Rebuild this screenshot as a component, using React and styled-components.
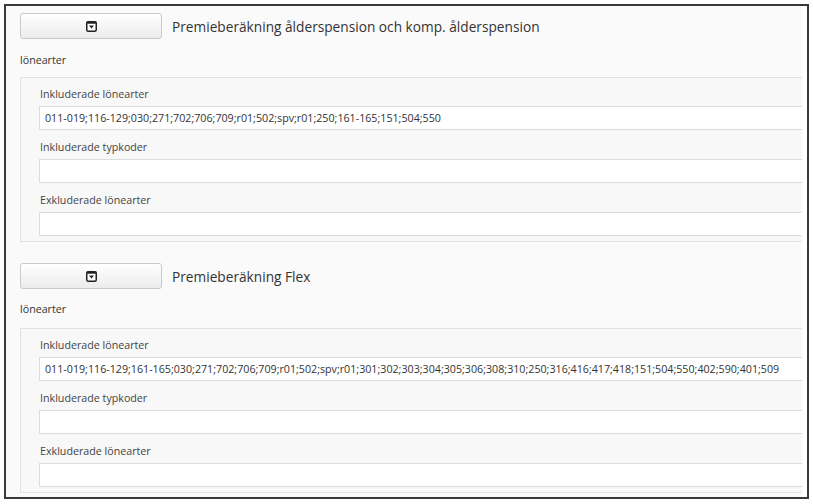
import styled, { createGlobalStyle } from 'styled-components';

const GlobalStyle = createGlobalStyle`
  html, body {
    margin: 0;
    padding: 0;
    background: #ffffff;
  }
  body {
    font-family: "Open Sans", "Noto Sans", "Liberation Sans", sans-serif;
    color: #333;
  }
`;

const Frame = styled.div`
  margin: 4px;
  width: 796px;
  height: 491px;
  border: 2px solid #3a3a3a;
  background: #ffffff;
  padding-right: 5px;
  box-sizing: content-box;
  display: flex;
`;

const Scroller = styled.div`
  flex: 1;
  overflow: hidden;
  background: #fafafa;
  padding: 7px 0 0 14px;
`;

const Section = styled.section`
  display: flex;
  flex-direction: column;
  margin-bottom: 21px;
`;

const Header = styled.div`
  display: flex;
  align-items: center;
  height: 26px;
`;

const ToggleButton = styled.button`
  width: 142px;
  height: 26px;
  border: 1px solid #cacaca;
  border-radius: 3px;
  background: linear-gradient(#ffffff, #ececec);
  display: flex;
  align-items: center;
  justify-content: center;
  padding: 0;
  cursor: pointer;
`;

const Title = styled.h2`
  margin: 0 0 0 10px;
  font-size: 13.7px;
  font-weight: 400;
  color: #333;
  white-space: nowrap;
`;

const GroupLabel = styled.div`
  font-size: 10.7px;
  line-height: 15px;
  color: #333;
  margin: ${(p) => (p.$second ? '13px 0 11px' : '14px 0 9px')};
`;

const Box = styled.div`
  width: 800px;
  border: 1px solid #e2e2e2;
  background: #f8f8f8;
  padding: 9px 0 5px 18px;
  display: flex;
  flex-direction: column;
`;

const FieldLabel = styled.label`
  font-size: 10.7px;
  line-height: 15px;
  color: #444;
  margin: ${(p) => (p.$first ? '0 0 4px 1px' : '10px 0 4px 1px')};
`;

const Field = styled.input`
  box-sizing: border-box;
  width: 790px;
  height: 24px;
  border: 1px solid #dcdcdc;
  background: #ffffff;
  font-family: "Open Sans", "Noto Sans", "Liberation Sans", sans-serif;
  font-size: 10.7px;
  color: #333;
  padding: 0 5px;
  outline: none;
`;

const ToggleIcon = () => (
  <svg width="11" height="11" viewBox="0 0 11 11">
    <rect x="0.75" y="0.75" width="9.5" height="9.5" rx="1.5" fill="#fff" stroke="#222" strokeWidth="1.5" />
    <rect x="0.5" y="0.5" width="10" height="2.2" rx="1.2" fill="#222" />
    <path d="M3 4.6 L8 4.6 L5.5 7.6 Z" fill="#222" />
  </svg>
);

const sections = [
  {
    title: 'Premieberäkning ålderspension och komp. ålderspension',
    codes:
      '011-019;116-129;030;271;702;706;709;r01;502;spv;r01;250;161-165;151;504;550',
  },
  {
    title: 'Premieberäkning Flex',
    codes:
      '011-019;116-129;161-165;030;271;702;706;709;r01;502;spv;r01;301;302;303;304;305;306;308;310;250;316;416;417;418;151;504;550;402;590;401;509',
  },
];

export default function App() {
  return (
    <>
      <GlobalStyle />
      <Frame>
        <Scroller>
          {sections.map((s, i) => (
            <Section key={s.title}>
              <Header>
                <ToggleButton type="button">
                  <ToggleIcon />
                </ToggleButton>
                <Title>{s.title}</Title>
              </Header>
              <GroupLabel $second={i > 0}>lönearter</GroupLabel>
              <Box>
                <FieldLabel $first>Inkluderade lönearter</FieldLabel>
                <Field readOnly defaultValue={s.codes} />
                <FieldLabel>Inkluderade typkoder</FieldLabel>
                <Field readOnly defaultValue="" />
                <FieldLabel>Exkluderade lönearter</FieldLabel>
                <Field readOnly defaultValue="" />
              </Box>
            </Section>
          ))}
        </Scroller>
      </Frame>
    </>
  );
}
